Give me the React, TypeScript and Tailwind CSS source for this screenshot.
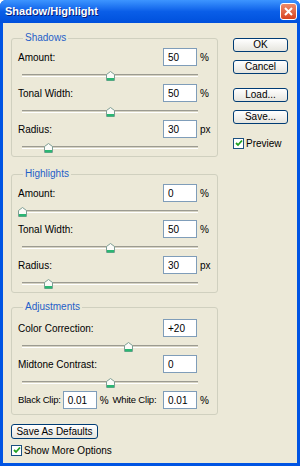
import React from "react";

const font = { fontFamily: '"Liberation Sans", Arial, sans-serif' };

function Thumb({ pct }: { pct: number }) {
  return (
    <svg
      width="9"
      height="10"
      viewBox="0 0 9 10"
      className="absolute top-[-4px]"
      style={{ left: `calc(${pct}% - 4px)` }}
    >
      <path d="M0.5 3.5 L4.5 0.5 L8.5 3.5 L8.5 9.5 L0.5 9.5 Z" fill="#fbfbf8" stroke="#7e9e94" />
      <rect x="1" y="7" width="7" height="2.5" fill="#2bb673" />
    </svg>
  );
}

function Slider({ pct }: { pct: number }) {
  return (
    <div className="h-[18px] flex items-center pl-[10px]">
      <div className="relative w-[176px] h-[3px] border-t border-t-[#9c9b91] border-b border-b-white bg-[#d6d3c3]">
        <Thumb pct={pct} />
      </div>
    </div>
  );
}

function Field({ value }: { value: string }) {
  return (
    <div className="w-[34px] h-[18px] shrink-0 border border-[#7f9db9] bg-white flex items-center px-[4px] text-[10px] text-black">
      {value}
    </div>
  );
}

function Row({ label, value, unit, pct }: { label: string; value: string; unit: string; pct: number }) {
  return (
    <div>
      <div className="h-[18px] flex items-center pl-[6px]">
        <span className="flex-1">{label}</span>
        <Field value={value} />
        <span className="w-[20px] pl-[3px]">{unit}</span>
      </div>
      <Slider pct={pct} />
    </div>
  );
}

function Group({ title, children, className = "" }: { title: string; children: React.ReactNode; className?: string }) {
  return (
    <div className={`relative border border-[#d0d0bf] rounded-[3px] ${className}`}>
      <span className="absolute -top-[7px] left-[11px] px-[2px] bg-[#ece9d8] text-[#1f5fc8] leading-[12px]">
        {title}
      </span>
      {children}
    </div>
  );
}

function Button({ children, className = "" }: { children: React.ReactNode; className?: string }) {
  return (
    <div
      className={`h-[14px] border border-[#003c74] rounded-[3px] bg-linear-to-b from-white to-[#e6e5de] flex items-center justify-center text-[10px] leading-none ${className}`}
    >
      {children}
    </div>
  );
}

function Check({ label, className = "" }: { label: string; className?: string }) {
  return (
    <div className={`flex items-center h-[12px] ${className}`}>
      <div className="w-[11px] h-[11px] border border-[#1c5180] bg-white flex items-center justify-center">
        <svg width="8" height="8" viewBox="0 0 8 8">
          <path d="M1 4 L3 6 L7 1.5" fill="none" stroke="#21a121" strokeWidth="1.8" />
        </svg>
      </div>
      <span className="ml-[2px]">{label}</span>
    </div>
  );
}

export default function App() {
  return (
    <div className="w-[300px] h-[466px] flex flex-col bg-[#0054e3] rounded-t-[6px] overflow-hidden text-[10px] text-black" style={font}>
      <div className="h-[23px] flex items-center px-[5px] bg-linear-to-b from-[#3d95ff] via-[#0a5ee8] to-[#0050dc]">
        <span className="flex-1 text-white font-bold text-[11px] [text-shadow:1px_1px_0_#0a1e7a]">Shadow/Highlight</span>
        <div className="w-[17px] h-[17px] mr-[-2px] rounded-[3px] border border-white bg-linear-to-b from-[#ec8a6a] to-[#d8401c] flex items-center justify-center">
          <svg width="9" height="9" viewBox="0 0 9 9">
            <path d="M1 1 L8 8 M8 1 L1 8" stroke="white" strokeWidth="2" />
          </svg>
        </div>
      </div>
      <div className="flex-1 mx-[3px] mb-[3px] bg-[#ece9d8] flex pl-[8px] pt-[15px]">
        <div className="w-[207px] flex flex-col">
          <Group title="Shadows" className="pt-[9px]">
            <Row label="Amount:" value="50" unit="%" pct={50} />
            <Row label="Tonal Width:" value="50" unit="%" pct={50} />
            <Row label="Radius:" value="30" unit="px" pct={15} />
          </Group>
          <Group title="Highlights" className="mt-[17px] pt-[9px]">
            <Row label="Amount:" value="0" unit="%" pct={0} />
            <Row label="Tonal Width:" value="50" unit="%" pct={50} />
            <Row label="Radius:" value="30" unit="px" pct={15} />
          </Group>
          <Group title="Adjustments" className="mt-[14px] pt-[11px] pb-[5px]">
            <Row label="Color Correction:" value="+20" unit="" pct={60} />
            <Row label="Midtone Contrast:" value="0" unit="" pct={50} />
            <div className="h-[18px] flex items-center pl-[6px] whitespace-nowrap">
              <span className="mr-[2px] text-[9.5px] tracking-[-0.2px]">Black Clip:</span>
              <Field value="0.01" />
              <span className="ml-[3px]">%</span>
              <span className="flex-1 pl-[4px] text-[9.5px] tracking-[-0.2px]">White Clip:</span>
              <Field value="0.01" />
              <span className="w-[20px] pl-[3px]">%</span>
            </div>
          </Group>
          <Button className="mt-[9px] w-[87px] h-[15px]">Save As Defaults</Button>
          <Check label="Show More Options" className="mt-[5px]" />
        </div>
        <div className="ml-[15px] w-[55px] flex flex-col">
          <Button>OK</Button>
          <Button className="mt-[8px]">Cancel</Button>
          <Button className="mt-[14px]">Load...</Button>
          <Button className="mt-[8px]">Save...</Button>
          <Check label="Preview" className="mt-[13px]" />
        </div>
      </div>
    </div>
  );
}
